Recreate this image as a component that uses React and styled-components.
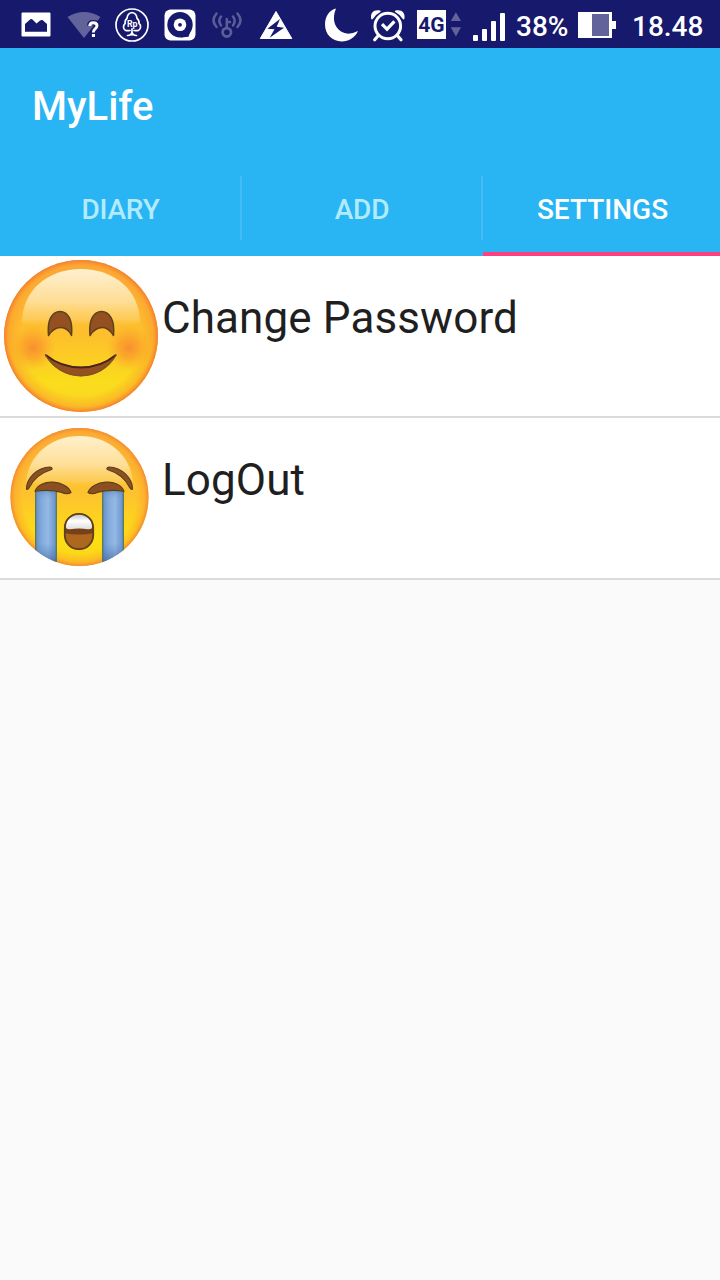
import React from "react";
import styled, { createGlobalStyle } from "styled-components";

const GlobalStyle = createGlobalStyle`
  * { box-sizing: border-box; }
  body {
    margin: 0;
    background: #fafafa;
    font-family: Roboto, "Noto Sans", sans-serif;
  }
`;

const Screen = styled.div`
  display: flex;
  flex-direction: column;
  width: 720px;
  height: 1280px;
  overflow: hidden;
  background: #fafafa;
`;

const StatusBar = styled.div`
  display: flex;
  height: 48px;
  padding-left: 20px;
  background: #17196d;
  color: #fff;
`;

const Glyph = styled.svg`
  flex: none;
  display: block;
  height: 48px;
  margin-left: ${(p) => p.$gap || 0}px;
`;

const StatusText = styled.span`
  flex: none;
  width: ${(p) => p.$width}px;
  margin-left: ${(p) => p.$gap}px;
  font-size: 28px;
  font-weight: 500;
  line-height: 53px;
  white-space: nowrap;
`;

const NetworkBadge = styled.span`
  flex: none;
  width: 29px;
  height: 29px;
  margin: 10px 0 0 10px;
  background: #fff;
  color: #17196d;
  font-size: 21px;
  font-weight: 700;
  line-height: 31px;
  text-align: center;
`;

const AppBar = styled.header`
  height: 208px;
  background: #29b4f4;
  color: #fff;
`;

const Title = styled.h1`
  height: 112px;
  margin: 0;
  padding: 3px 0 0 32px;
  font-size: 40px;
  font-weight: 500;
  line-height: 112px;
`;

const Tabs = styled.nav`
  display: grid;
  grid-template-columns: 240px 2px 239px 2px 237px;
  height: 96px;
`;

const Tab = styled.div`
  height: 96px;
  padding: 2px 0 0 ${(p) => (p.$active ? 2 : 1)}px;
  border-bottom: 4px solid ${(p) => (p.$active ? "#fc4180" : "transparent")};
  color: ${(p) => (p.$active ? "#fff" : "#b2ebff")};
  font-size: 28px;
  font-weight: 500;
  letter-spacing: ${(p) => (p.$active ? 0 : -0.2)}px;
  line-height: 96px;
  text-align: center;
`;

const TabDivider = styled.div`
  height: 64px;
  margin-top: 16px;
  background: #42bdf6;
`;

const List = styled.main`
  background: #fff;
`;

const Row = styled.div`
  display: flex;
  height: 162px;
  border-bottom: 2px solid #dadada;
`;

const Face = styled.svg`
  flex: none;
  display: block;
  width: 160px;
  height: 160px;
`;

const RowLabel = styled.span`
  padding: 36px 0 0 2px;
  color: #1f1f1f;
  font-size: 44px;
  letter-spacing: 0.1px;
  line-height: 52px;
  white-space: nowrap;
`;

const PictureIcon = () => (
  <Glyph width="32" viewBox="20 0 32 48">
    <path fill="#fff" fillRule="evenodd" d="M22.500 12.500H49.500Q50.500 12.500 50.500 13.500V35.500Q50.500 36.500 49.500 36.500H22.500Q21.500 36.500 21.500 35.500V13.500Q21.500 12.500 22.500 12.500ZM25 31.700H47V24L42.500 20Q41 19.500 39.500 21L36.500 23.500L32.500 19.500Q31 18.500 29.500 20L25 24Z" />
  </Glyph>
);

const WifiUnknownIcon = () => (
  <Glyph $gap={14} width="36" viewBox="66 0 36 48">
    <path fill="#62639b" d="M67.500 17Q84 7 100.500 17L84 38Z" />
    <path fill="none" stroke="#17196d" strokeWidth="5.500" d="M89.800 25.500Q89.800 22.700 93.300 22.700Q97 22.700 97 25.800Q97 27.700 94.800 29.200Q93.400 30.200 93.400 32.600" />
    <path fill="none" stroke="#fff" strokeWidth="2.900" d="M89.800 26Q89.800 22.700 93.300 22.700Q97 22.700 97 25.800Q97 27.700 94.800 29.200Q93.400 30.200 93.400 32.600" />
    <rect x="91.900" y="34" width="3.100" height="3" fill="#fff" />
  </Glyph>
);

const RupiahTreeIcon = () => (
  <Glyph $gap={12} width="36" viewBox="114 0 36 48">
    <circle cx="132" cy="25" r="16" fill="none" stroke="#fff" strokeWidth="1.700" />
    <path fill="none" stroke="#fff" strokeWidth="1.700" strokeLinecap="round" strokeLinejoin="round" d="M130 30.500Q123.800 31.500 123.500 27.200Q123.300 25 125.200 23.300Q124.500 20.500 127 18.300Q127.500 13 132 12.500Q136.500 13 137 18.300Q139.500 20.500 139 23.300Q141 25 140.500 27.200Q140.200 31.500 134 30.500M132 28.800V35M132 31.500Q132 35.300 127.500 35.500M132 31.500Q132 35.300 136.500 35.500" />
    <text x="132.200" y="26.800" textAnchor="middle" fill="#fff" fontFamily="Roboto, sans-serif" fontSize="8.800" fontWeight="700">Rp</text>
  </Glyph>
);

const DiscIcon = () => (
  <Glyph $gap={13} width="34" viewBox="163 0 34 48">
    <rect x="164.500" y="9.500" width="31" height="31" rx="6" fill="#fff" />
    <circle cx="180" cy="24.800" r="12.700" fill="#17196d" />
    <path fill="#17196d" d="M182 32L191 30L188.500 36.800L181 37.500Z" />
    <circle cx="180" cy="24.800" r="6.300" fill="#fff" />
    <circle cx="180" cy="24.800" r="1.900" fill="#17196d" />
  </Glyph>
);

const KeySignalIcon = () => (
  <Glyph $gap={13} width="34" viewBox="210 0 34 48">
    <g fill="none" stroke="#5c5d97" strokeWidth="2.500" strokeLinecap="round">
      <circle cx="226.800" cy="32.300" r="4.200" strokeWidth="2.800" />
      <path d="M226.800 28V19M227 22H230" />
      <path d="M221 16.500Q217.600 20.500 221 25.500M233 16.500Q236.400 20.500 233 25.500M216.500 13.500Q210.500 20.500 216.500 27M237.500 13.500Q243.500 20.500 237.500 27" />
    </g>
  </Glyph>
);

const BoltTriangleIcon = () => (
  <Glyph $gap={14} width="36" viewBox="258 0 36 48">
    <path fill="#fff" stroke="#fff" strokeWidth="1" strokeLinejoin="round" d="M276 11.500L291.800 38.500H260.300Z" />
    <path fill="#17196d" d="M280 19L267.300 28.800L274.500 29.300L269.700 37.800L284 27.800L276.700 26.800Z" />
  </Glyph>
);

const MoonIcon = () => (
  <Glyph $gap={29} width="37" viewBox="323 0 37 48">
    <path fill="#fff" d="M336 8.500C332 18 334 27 341 31.500Q348 36 358 31C355 38 348 41.700 341.500 41.500C332 41 325 34.500 325 24.500C325 16 329.500 10.300 336 8.500Z" />
  </Glyph>
);

const AlarmIcon = () => (
  <Glyph $gap={9} width="38" viewBox="369 0 38 48">
    <g fill="none" stroke="#fff" strokeLinecap="round">
      <circle cx="387.800" cy="26" r="12.800" strokeWidth="3" />
      <path strokeWidth="3.200" d="M377.500 36.500L374.700 39.800M398.200 36.500L401 39.800" />
      <path strokeWidth="3.200" strokeLinecap="butt" d="M382 24.200L387 29.100L394.400 21.300" />
    </g>
    <path fill="#fff" d="M371.200 18.800C370 13 374 9.300 379.800 10.500C381 10.800 381 11.700 380 12.200Q375.300 14.700 373 18.800Q371.800 20.200 371.200 18.800ZM404.400 18.800C405.600 13 401.600 9.300 395.800 10.500C394.600 10.800 394.600 11.700 395.600 12.200Q400.300 14.700 402.600 18.800Q403.800 20.200 404.400 18.800Z" />
  </Glyph>
);

const DataArrowsIcon = () => (
  <Glyph $gap={4} width="12" viewBox="450 0 12 48">
    <path fill="#62639b" d="M455.900 12.200L461 21H450.800ZM450.800 27.300H461L455.900 36.500Z" />
  </Glyph>
);

const SignalIcon = () => (
  <Glyph $gap={9} width="36" viewBox="471 0 36 48">
    <g fill="#fff">
      <rect x="473" y="35" width="5" height="6" rx="1" />
      <rect x="482" y="29" width="5" height="12" rx="1" />
      <rect x="491" y="21" width="5" height="20" rx="1" />
      <rect x="500" y="13" width="5" height="28" rx="1" />
    </g>
  </Glyph>
);

const BatteryIcon = () => (
  <Glyph width="42" viewBox="576 0 42 48">
    <path fill="#fff" d="M578 12H612V21H616V29H612V38H578Z" />
    <rect x="592" y="14" width="17" height="22" fill="#62639b" />
  </Glyph>
);

const SmilingFace = () => (
  <Face viewBox="0 0 160 160">
    <defs>
      <linearGradient id="smileBase" x1="0" y1="0" x2="0" y2="1">
        <stop offset="0" stopColor="#fbb23c" />
        <stop offset="0.500" stopColor="#fdc02b" />
        <stop offset="0.800" stopColor="#fadc1c" />
        <stop offset="1" stopColor="#fbd622" />
      </linearGradient>
      <radialGradient id="smileRim">
        <stop offset="0.780" stopColor="#fb9a2c" stopOpacity="0" />
        <stop offset="0.930" stopColor="#fb9a2c" stopOpacity="0.500" />
        <stop offset="1" stopColor="#f47e32" />
      </radialGradient>
      <linearGradient id="smileShine" x1="0" y1="0" x2="0" y2="1">
        <stop offset="0" stopColor="#fff0cf" />
        <stop offset="0.550" stopColor="#fee09c" stopOpacity="0.950" />
        <stop offset="0.850" stopColor="#fed472" stopOpacity="0.600" />
        <stop offset="1" stopColor="#fdc540" stopOpacity="0" />
      </linearGradient>
      <radialGradient id="blush">
        <stop offset="0" stopColor="#f78632" stopOpacity="0.850" />
        <stop offset="0.450" stopColor="#f98f2c" stopOpacity="0.550" />
        <stop offset="1" stopColor="#fba42c" stopOpacity="0" />
      </radialGradient>
    </defs>
    <ellipse cx="81" cy="80" rx="77" ry="76" fill="url(#smileBase)" />
    <ellipse cx="81" cy="80" rx="77" ry="76" fill="url(#smileRim)" />
    <path fill="url(#smileShine)" d="M22 67C22 34 48 13 81 13S140 34 140 67Q81 77 22 67Z" />
    <circle cx="33" cy="92" r="23" fill="url(#blush)" />
    <circle cx="129" cy="92" r="23" fill="url(#blush)" />
    <g fill="#955021" stroke="#5a421d" strokeWidth="1.500" strokeLinejoin="round">
      <path d="M48.500 79.500C47 64 52 55.500 60 55.500S73 64 71.500 79.500C69 74 65 71.500 60.500 71.500S52 74 48.500 79.500Z" />
      <path d="M90 79.500C88.500 64 93.500 55.500 101.500 55.500S115 64 113.500 79.500C110 74 107 71.500 102.500 71.500S93.500 74 90 79.500Z" />
      <path stroke="none" d="M44.500 98C66 115 95 115 117 98C109 112 96 120.500 81 120.500S52 112 44.500 98Z" />
    </g>
    <path fill="none" stroke="#4b241d" strokeWidth="2" strokeLinecap="round" d="M46 99.300C66 115.500 96 115.500 115.500 99.300" />
    <path fill="none" stroke="#76571c" strokeWidth="1.300" strokeLinecap="round" d="M46 100C54 112 66 119.500 81 119.500S108 112 115.500 100" />
  </Face>
);

const CryingFace = () => (
  <Face viewBox="0 0 160 160">
    <defs>
      <linearGradient id="cryBase" x1="0" y1="0" x2="0" y2="1">
        <stop offset="0" stopColor="#fbb33b" />
        <stop offset="0.500" stopColor="#fdc42d" />
        <stop offset="0.800" stopColor="#fddf12" />
        <stop offset="1" stopColor="#fbd11e" />
      </linearGradient>
      <radialGradient id="cryRim">
        <stop offset="0.820" stopColor="#fba52d" stopOpacity="0" />
        <stop offset="0.940" stopColor="#fb9f2b" stopOpacity="0.500" />
        <stop offset="1" stopColor="#f38a35" />
      </radialGradient>
      <linearGradient id="cryShine" x1="0" y1="0" x2="0" y2="1">
        <stop offset="0" stopColor="#fff0cc" />
        <stop offset="0.550" stopColor="#fee19e" stopOpacity="0.950" />
        <stop offset="0.850" stopColor="#fed672" stopOpacity="0.600" />
        <stop offset="1" stopColor="#fdc83e" stopOpacity="0" />
      </linearGradient>
      <linearGradient id="tear" x1="0" y1="0" x2="1" y2="0">
        <stop offset="0" stopColor="#638fc9" />
        <stop offset="0.300" stopColor="#83abdc" />
        <stop offset="0.600" stopColor="#95b9e4" />
        <stop offset="1" stopColor="#6290cc" />
      </linearGradient>
      <linearGradient id="tearShade" x1="0" y1="0" x2="0" y2="1">
        <stop offset="0" stopColor="#4d7fba" stopOpacity="0.500" />
        <stop offset="0.120" stopColor="#7aa5da" stopOpacity="0" />
        <stop offset="0.700" stopColor="#5685be" stopOpacity="0" />
        <stop offset="1" stopColor="#315f99" stopOpacity="0.800" />
      </linearGradient>
      <linearGradient id="teeth" x1="0" y1="0" x2="0" y2="1">
        <stop offset="0" stopColor="#c5c2c2" />
        <stop offset="0.450" stopColor="#fff" />
        <stop offset="1" stopColor="#ddd" />
      </linearGradient>
      <clipPath id="cryClip"><circle cx="79.500" cy="79" r="69" /></clipPath>
      <clipPath id="mouthClip"><rect x="64.500" y="95.500" width="29" height="36" rx="14" /></clipPath>
    </defs>
    <circle cx="79.500" cy="79" r="69" fill="url(#cryBase)" />
    <circle cx="79.500" cy="79" r="69" fill="url(#cryRim)" />
    <path fill="url(#cryShine)" d="M26 65C28 36 52 18 79.500 18S131 36 133 65Q79 75 26 65Z" />
    <g clipPath="url(#cryClip)">
      <g fill="url(#tear)">
        <path d="M35.500 74Q46 71 56.500 74V150H35.500Z" />
        <path d="M102.500 74Q112 71 123.500 74V150H102.500Z" />
      </g>
      <g fill="url(#tearShade)">
        <path d="M35.500 74Q46 71 56.500 74V147H35.500Z" />
        <path d="M102.500 74Q112 71 123.500 74V147H102.500Z" />
      </g>
      <path fill="none" stroke="#587763" strokeWidth="1.300" d="M35.700 74V145M56.300 74V148M102.700 74V148M123.300 74V145" />
    </g>
    <g fill="#8c4f22" stroke="#58401c" strokeWidth="1.200" strokeLinejoin="round">
      <path d="M35 73.500C37 67 45 63.800 53 64.200C62 64.500 69 69 71 74.500C68 76.500 64 75.500 61 74.200C52 72 43 72 35 73.500Z" />
      <path d="M124 73.500C122 67 114 63.800 106 64.200C97 64.500 90 69 88 74.500C91 76.500 95 75.500 98 74.200C107 72 116 72 124 73.500Z" />
      <path d="M26.500 71C26.500 60 37 49.500 50 49C53 49.500 52.500 51.500 50.500 52C40 55 33 62 29 70Q27.500 72 26.500 71Z" />
      <path d="M132.500 71C132.500 60 122 49.500 109 49C106 49.500 106.500 51.500 108.500 52C119 55 126 62 130 70Q131.500 72 132.500 71Z" />
    </g>
    <g clipPath="url(#mouthClip)">
      <rect x="64" y="95" width="30" height="37" fill="#ad671e" />
      <path d="M64 109H94V115Q79 118 64 115Z" fill="#764118" />
      <path d="M66 109C66 92 92 92 92 109Q92 111.500 88 111.200Q79 109.800 70 111.200Q66 111.500 66 109Z" fill="url(#teeth)" />
    </g>
    <rect x="64.800" y="95.800" width="28.400" height="35.400" rx="14" fill="none" stroke="#5d411b" strokeWidth="1.800" />
  </Face>
);

const settings = [
  { label: "Change Password", Icon: SmilingFace },
  { label: "LogOut", Icon: CryingFace },
];

export default function App() {
  return (
    <Screen>
      <GlobalStyle />
      <StatusBar>
        <PictureIcon />
        <WifiUnknownIcon />
        <RupiahTreeIcon />
        <DiscIcon />
        <KeySignalIcon />
        <BoltTriangleIcon />
        <MoonIcon />
        <AlarmIcon />
        <NetworkBadge>4G</NetworkBadge>
        <DataArrowsIcon />
        <SignalIcon />
        <StatusText $gap={9} $width={60}>38%</StatusText>
        <BatteryIcon />
        <StatusText $gap={14} $width={80}>18.48</StatusText>
      </StatusBar>
      <AppBar>
        <Title>MyLife</Title>
        <Tabs>
          <Tab>DIARY</Tab>
          <TabDivider />
          <Tab>ADD</Tab>
          <TabDivider />
          <Tab $active>SETTINGS</Tab>
        </Tabs>
      </AppBar>
      <List>
        {settings.map(({ label, Icon }) => (
          <Row key={label}>
            <Icon />
            <RowLabel>{label}</RowLabel>
          </Row>
        ))}
      </List>
    </Screen>
  );
}
